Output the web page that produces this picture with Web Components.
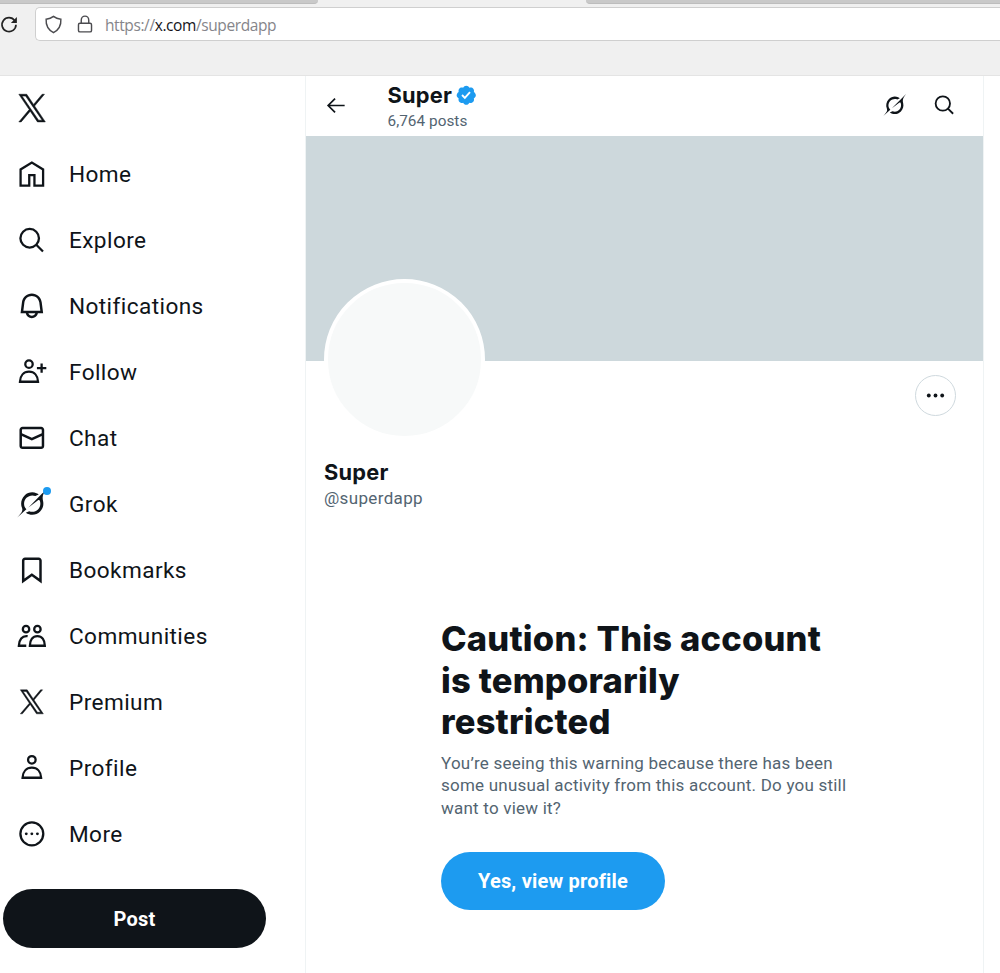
<!DOCTYPE html>
<html lang="en">
<head>
<meta charset="utf-8">
<title>Super (@superdapp) / X</title>
<style>
  html, body { margin: 0; height: 100%; overflow: hidden; }
  body {
    display: flex;
    flex-direction: column;
    background: #fff;
    color: #0f1419;
    font-family: Roboto, "Liberation Sans", sans-serif;
  }
  main { display: flex; flex: 1; min-height: 0; }
</style>
</head>
<body>
<browser-bar host="x.com" path="/superdapp"></browser-bar>
<main>
  <side-nav>
    <nav-item icon="home">Home</nav-item>
    <nav-item icon="search">Explore</nav-item>
    <nav-item icon="bell">Notifications</nav-item>
    <nav-item icon="follow">Follow</nav-item>
    <nav-item icon="mail">Chat</nav-item>
    <nav-item icon="grok" dot>Grok</nav-item>
    <nav-item icon="bookmark">Bookmarks</nav-item>
    <nav-item icon="people">Communities</nav-item>
    <nav-item icon="x">Premium</nav-item>
    <nav-item icon="person">Profile</nav-item>
    <nav-item icon="more">More</nav-item>
    <pill-button slot="action" style="--w: 263px; --bg: #0f1419">Post</pill-button>
  </side-nav>
  <profile-page name="Super" handle="@superdapp" posts="6,764 posts">
    <account-warning>
      <span slot="title">Caution: This account<br>is temporarily<br>restricted</span>
      <span slot="text">You’re seeing this warning because there has been<br>some unusual activity from this account. Do you still<br>want to view it?</span>
      <pill-button style="--w: 224px; --bg: #1d9bf0">Yes, view profile</pill-button>
    </account-warning>
  </profile-page>
</main>

<script>
const ICONS = {
  home: `<path class="s" d="M2.9 20.8V7.6L12 2l9.1 5.6v13.200h-7v-8.500H9.9v8.500z"/>`,
  search: `<g class="s"><circle cx="10.25" cy="9.9" r="7.5"/><path d="M15.6 15.2l5.4 5.4"/></g>`,
  bell: `<path d="M19.993 9.042C19.48 5.017 16.054 2 11.996 2s-7.49 3.021-7.999 7.051L2.866 18H7.1c.463 2.282 2.481 4 4.9 4s4.437-1.718 4.9-4h4.236l-1.143-8.958zM12 20c-1.306 0-2.417-.835-2.829-2h5.658c-.412 1.165-1.523 2-2.829 2zm-6.866-4l.847-6.698C6.364 6.272 8.941 4 11.996 4s5.627 2.268 6.013 5.295L18.864 16H5.134z"/>`,
  follow: `<g class="s"><circle cx="9.7" cy="5.8" r="3"/><path d="M2.4 20c.2-5 3-8.1 7.3-8.1s7.1 3.1 7.3 8.1zM19.9 5.2v7.6M16.1 9h7.6"/></g>`,
  mail: `<path d="M1.998 5.5c0-1.381 1.119-2.5 2.5-2.5h15c1.381 0 2.5 1.119 2.5 2.5v13c0 1.381-1.119 2.5-2.5 2.5h-15c-1.381 0-2.5-1.119-2.5-2.5v-13zm2.5-.5c-.276 0-.5.224-.5.5v2.764l8 3.638 8-3.636V5.5c0-.276-.224-.5-.5-.5h-15zm15.5 5.463l-8 3.636-8-3.638V18.5c0 .276.224.5.5.5h15c.276 0 .5-.224.5-.5v-8.037z"/>`,
  grok: `<path transform="scale(.7273)" d="M12.745 20.54l10.97-8.19c.539-.4 1.307-.244 1.564.38 1.349 3.288.746 7.241-1.938 9.955-2.683 2.714-6.417 3.31-9.83 1.954l-3.728 1.745c5.347 3.697 11.84 2.782 15.898-1.324 3.219-3.255 4.216-7.692 3.284-11.693l.008.009c-1.351-5.878.332-8.227 3.782-13.031L33 0l-4.54 4.59v-.014L12.743 20.544m-2.263 1.987c-3.837-3.707-3.175-9.446.1-12.755 2.42-2.449 6.388-3.448 9.852-1.979l3.72-1.737c-.67-.49-1.53-1.017-2.515-1.387-4.455-1.854-9.789-.931-13.41 2.728-3.483 3.523-4.579 8.94-2.697 13.561 1.405 3.454-.899 5.898-3.22 8.364C1.49 30.2.666 31.074 0 32l10.478-9.466"/>`,
  bookmark: `<path d="M4 4.5C4 3.12 5.119 2 6.5 2h11C18.881 2 20 3.12 20 4.5v18.44l-8-5.71-8 5.71V4.5zM6.5 4c-.276 0-.5.22-.5.5v14.56l6-4.29 6 4.29V4.5c0-.28-.224-.5-.5-.5h-11z"/>`,
  people: `<g class="s"><circle cx="7.3" cy="6.6" r="2.6"/><circle cx="16.5" cy="6.6" r="2.6"/><path d="M10.4 20c.1-4.700 2.300-7.800 6.050-7.800s5.950 3.100 6.050 7.800zM8.600 12.300c-4.500-.6-7 2.700-7.100 7.700h6"/></g>`,
  x: `<path stroke="currentColor" stroke-width="24" transform="translate(2.7 2.3) scale(.0155 .0158)" d="M714.163 519.284L1160.89 0H1055.03L667.137 450.887L357.328 0H0L468.492 681.821L0 1226.37H105.866L515.491 750.218L842.672 1226.37H1200L714.137 519.284H714.163ZM569.165 687.828L521.697 619.934L144.011 79.6944H306.615L611.412 515.685L658.88 583.579L1055.08 1150.3H892.476L569.165 687.854V687.828Z"/>`,
  person: `<g class="s"><circle cx="12" cy="5.500" r="3.050"/><path d="M4.500 20c.2-5 3.100-8.100 7.500-8.100s7.300 3.100 7.500 8.100z"/></g>`,
  more: `<circle class="s" cx="12" cy="12" r="9.250"/><circle cx="7.500" cy="12" r="1.150"/><circle cx="12" cy="12" r="1.150"/><circle cx="16.500" cy="12" r="1.150"/>`,
  dots: `<circle cx="5" cy="12" r="2"/><circle cx="12" cy="12" r="2"/><circle cx="19" cy="12" r="2"/>`,
  back: `<path class="s" d="M20.500 12H4M10.500 4.800L3.300 12l7.200 7.200"/>`,
  badge: `<path transform="scale(1.0909)" d="M20.396 11c-.018-.646-.215-1.275-.57-1.816-.354-.54-.852-.972-1.438-1.246.223-.607.27-1.264.14-1.897-.131-.634-.437-1.218-.882-1.687-.47-.445-1.053-.75-1.687-.882-.633-.13-1.29-.083-1.897.14-.273-.587-.704-1.086-1.245-1.44S11.647 1.62 11 1.604c-.646.017-1.273.213-1.813.568s-.969.854-1.24 1.44c-.608-.223-1.267-.272-1.902-.14-.635.13-1.22.436-1.69.882-.445.47-.749 1.055-.878 1.688-.13.633-.08 1.29.144 1.896-.587.274-1.087.705-1.443 1.245-.356.54-.555 1.17-.574 1.817.02.647.218 1.276.574 1.817.356.54.856.972 1.443 1.245-.224.606-.274 1.263-.144 1.896.13.634.433 1.218.877 1.688.47.443 1.054.747 1.687.878.633.132 1.29.084 1.897-.136.274.586.705 1.084 1.246 1.439.54.354 1.17.551 1.816.569.647-.016 1.276-.213 1.817-.567s.972-.854 1.245-1.44c.604.239 1.266.296 1.903.164.636-.132 1.22-.447 1.68-.907.46-.46.776-1.044.908-1.681s.075-1.299-.165-1.903c.586-.274 1.084-.705 1.439-1.246.354-.54.551-1.17.569-1.816zM9.662 14.85l-3.429-3.428 1.293-1.302 2.072 2.072 4.4-4.794 1.347 1.246z"/>`,
  reload: `<g class="s"><path d="M19.600 7.500A9.300 9.300 0 1 0 21.300 13"/></g><path d="M22.500 2.500v8h-8z"/>`,
  shield: `<path class="s" d="M12 1.800c2.500 2 5.300 3.100 9.300 3.500.5 7-2 13-9.300 17-7.300-4-9.800-10-9.300-17 4-.4 6.800-1.500 9.300-3.500z"/>`,
  lock: `<g class="s"><rect x="3.300" y="11" width="17.400" height="11.500" rx="2"/><path d="M7 11V7a5 5.500 0 0 1 10 0v4"/></g>`
};

class UiIcon extends HTMLElement {
  constructor() {
    super();
    this.attachShadow({ mode: "open" });
  }

  connectedCallback() {
    this.shadowRoot.innerHTML = `
      <style>
        :host { display: block; flex: none; width: var(--size, 29.700px); height: var(--size, 29.700px); }
        svg { display: block; width: 100%; height: 100%; fill: currentColor; overflow: visible; }
        .s { fill: none; stroke: currentColor; stroke-width: var(--stroke, 1.85); }
      </style>
      <svg viewBox="0 0 24 24" aria-hidden="true">${ICONS[this.getAttribute("name")]}</svg>
    `;
  }
}

class BrowserBar extends HTMLElement {
  constructor() {
    super();
    this.attachShadow({ mode: "open" });
  }

  connectedCallback() {
    this.shadowRoot.innerHTML = `
      <style>
        :host {
          display: flex;
          flex-direction: column;
          flex: none;
          box-sizing: border-box;
          height: 76px;
          background: #f0f0f0;
          border-bottom: 1px solid #e4e4e4;
          font: 15.500px/32px "Open Sans", "Noto Sans", sans-serif;
        }
        .tabs { display: flex; justify-content: space-between; height: 4px; margin-bottom: 3px; }
        .tabs i { background: #c9c9c9; border-bottom: 1px solid #bdbdbd; box-sizing: border-box; }
        .tabs i:first-child { width: 318px; border-bottom-right-radius: 4px; }
        .tabs i:last-child { width: 414px; border-bottom-left-radius: 4px; }
        .row { display: flex; align-items: center; }
        .reload { --size: 18px; --stroke: 2.300; color: #222; }
        .url {
          display: flex;
          flex: 1;
          align-items: center;
          height: 32px;
          margin-left: 17px;
          padding-left: 7.500px;
          background: #fff;
          border: 1px solid #cfcfcf;
          border-right: 0;
          border-radius: 5px 0 0 5px;
          color: #85858a;
        }
        .shield { --size: 19px; --stroke: 1.800; color: #4b4b4f; margin-right: 13px; }
        .lock { --size: 18px; --stroke: 1.900; color: #4b4b4f; margin-right: 11.500px; }
        b { font-weight: 400; color: #15141a; }
        .text { letter-spacing: -.4px; padding-top: 1px; }
      </style>
      <div class="tabs"><i></i><i></i></div>
      <div class="row">
        <ui-icon class="reload" name="reload"></ui-icon>
        <div class="url">
          <ui-icon class="shield" name="shield"></ui-icon>
          <ui-icon class="lock" name="lock"></ui-icon>
          <span class="text">https://<b>${this.getAttribute("host")}</b>${this.getAttribute("path")}</span>
        </div>
      </div>
    `;
  }
}

class SideNav extends HTMLElement {
  constructor() {
    super();
    this.attachShadow({ mode: "open" });
  }

  connectedCallback() {
    this.shadowRoot.innerHTML = `
      <style>
        :host {
          display: flex;
          flex-direction: column;
          flex: none;
          box-sizing: border-box;
          width: 306px;
          border-right: 1px solid #eff3f4;
        }
        .logo { --size: 34.200px; padding: 14.500px 0 16.800px 15.300px; }
        nav { display: flex; flex-direction: column; }
        .action { padding: 22.500px 0 0 3px; }
      </style>
      <div class="logo"><ui-icon name="x"></ui-icon></div>
      <nav><slot></slot></nav>
      <div class="action"><slot name="action"></slot></div>
    `;
  }
}

class NavItem extends HTMLElement {
  constructor() {
    super();
    this.attachShadow({ mode: "open" });
  }

  connectedCallback() {
    this.shadowRoot.innerHTML = `
      <style>
        :host {
          display: flex;
          align-items: center;
          height: 65.950px;
          padding-left: 16.600px;
          gap: 22.700px;
          font-size: 22.600px;
          letter-spacing: .42px;
        }
        .icon { position: relative; }
        span { padding-top: 1px; }
        .dot {
          position: absolute;
          top: -2.500px;
          right: -4.500px;
          width: 8px;
          height: 8px;
          border-radius: 50%;
          background: #1d9bf0;
        }
      </style>
      <div class="icon">
        <ui-icon name="${this.getAttribute("icon")}"></ui-icon>
        ${this.hasAttribute("dot") ? `<div class="dot"></div>` : ""}
      </div>
      <span><slot></slot></span>
    `;
  }
}

class PillButton extends HTMLElement {
  constructor() {
    super();
    this.attachShadow({ mode: "open" });
  }

  connectedCallback() {
    this.shadowRoot.innerHTML = `
      <style>
        :host { display: block; }
        button {
          display: block;
          width: var(--w);
          height: 58.500px;
          padding: 1px 0 0;
          border: 0;
          border-radius: 30px;
          background: var(--bg);
          color: #fff;
          font: 700 20px/1 Roboto, "Liberation Sans", sans-serif;
          letter-spacing: .2px;
        }
      </style>
      <button><slot></slot></button>
    `;
  }
}

class ProfilePage extends HTMLElement {
  constructor() {
    super();
    this.attachShadow({ mode: "open" });
  }

  connectedCallback() {
    const name = this.getAttribute("name");
    this.shadowRoot.innerHTML = `
      <style>
        :host {
          display: block;
          box-sizing: border-box;
          width: 678px;
          border-right: 1px solid #eff3f4;
        }
        header {
          display: flex;
          align-items: center;
          box-sizing: border-box;
          height: 60px;
          padding: 0 27px 0 18.500px;
        }
        .back { --size: 23px; --stroke: 1.800; margin: -1px 40px 0 0; }
        .who { flex: 1; padding-top: 3px; }
        h1, h2 { margin: 0; font: 700 21.800px/28px Inter, Roboto, sans-serif; letter-spacing: .25px; }
        h1 { display: flex; align-items: center; gap: 2.500px; }
        .badge { --size: 22.500px; color: #1d9bf0; }
        .sub { color: #536471; font-size: 15.300px; line-height: 25px; letter-spacing: .05px; }
        .tools { display: flex; gap: 27px; margin-top: -1px; --size: 23px; --stroke: 1.900; }
        .banner { height: 225px; background: #cdd8dc; }
        .row { display: flex; justify-content: space-between; padding: 0 27px 0 18px; }
        .avatar {
          box-sizing: border-box;
          width: 161px;
          height: 161px;
          margin-top: -82px;
          border: 4.500px solid #fff;
          border-radius: 50%;
          background: #f7f9f9;
        }
        .options {
          display: flex;
          align-items: center;
          justify-content: center;
          box-sizing: border-box;
          width: 41px;
          height: 41px;
          margin-top: 14px;
          border: 1px solid #cfd9de;
          border-radius: 50%;
          --size: 23px;
        }
        .name { padding: 18px 0 0 18px; }
        .name .sub { font-size: 17px; letter-spacing: .35px; }
      </style>
      <header>
        <ui-icon class="back" name="back"></ui-icon>
        <div class="who">
          <h1>${name}<ui-icon class="badge" name="badge"></ui-icon></h1>
          <div class="sub">${this.getAttribute("posts")}</div>
        </div>
        <div class="tools"><ui-icon name="grok"></ui-icon><ui-icon name="search"></ui-icon></div>
      </header>
      <div class="banner"></div>
      <div class="row">
        <div class="avatar"></div>
        <div class="options"><ui-icon name="dots"></ui-icon></div>
      </div>
      <div class="name">
        <h2>${name}</h2>
        <div class="sub">${this.getAttribute("handle")}</div>
      </div>
      <slot></slot>
    `;
  }
}

class AccountWarning extends HTMLElement {
  constructor() {
    super();
    this.attachShadow({ mode: "open" });
  }

  connectedCallback() {
    this.shadowRoot.innerHTML = `
      <style>
        :host { display: block; padding: 107px 0 0 135px; white-space: nowrap; }
        h2 { margin: 0 0 9px; font: 800 34.500px/41.500px Inter, Roboto, sans-serif; letter-spacing: .2px; }
        p { margin: 0 0 32px; color: #536471; font-size: 17px; line-height: 22.700px; letter-spacing: .22px; }
      </style>
      <h2><slot name="title"></slot></h2>
      <p><slot name="text"></slot></p>
      <slot></slot>
    `;
  }
}

customElements.define("ui-icon", UiIcon);
customElements.define("browser-bar", BrowserBar);
customElements.define("side-nav", SideNav);
customElements.define("nav-item", NavItem);
customElements.define("pill-button", PillButton);
customElements.define("profile-page", ProfilePage);
customElements.define("account-warning", AccountWarning);
</script>
</body>
</html>
